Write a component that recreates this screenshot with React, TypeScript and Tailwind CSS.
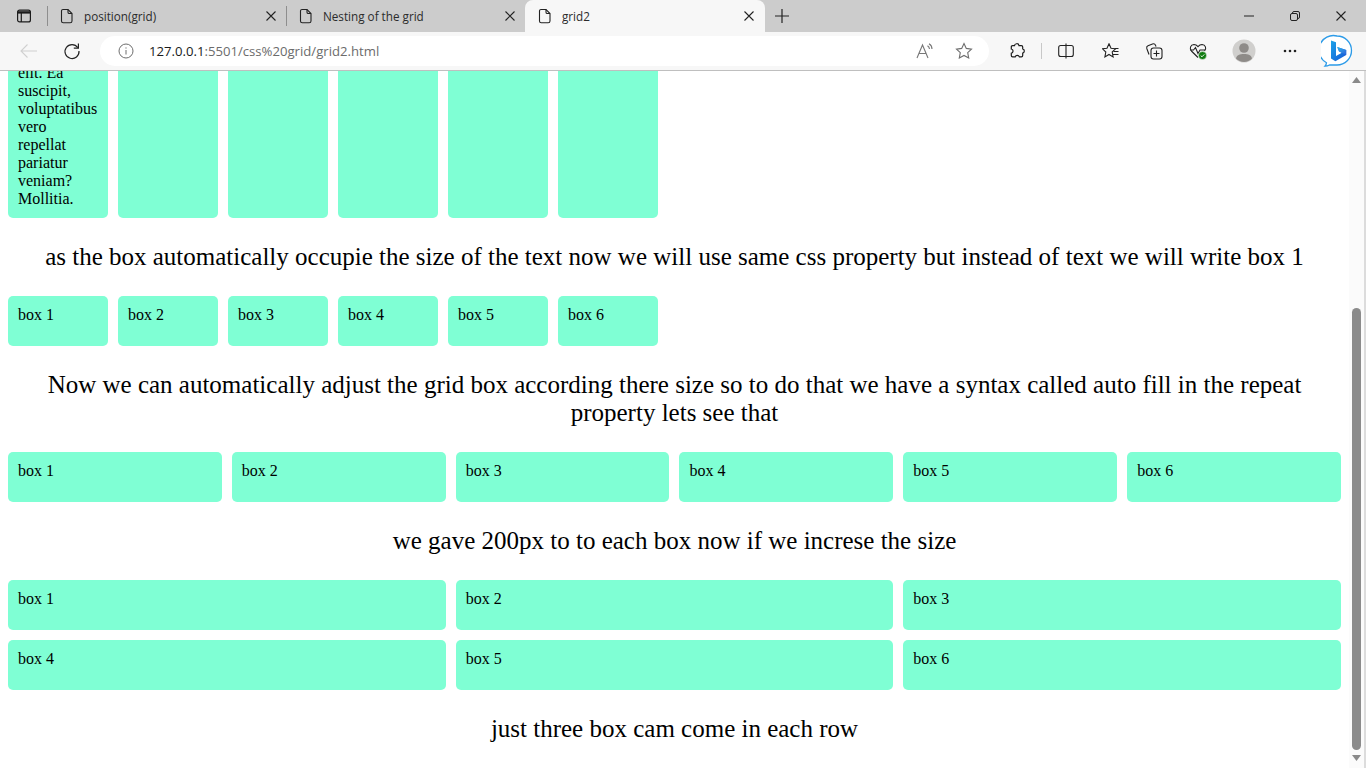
import React from "react";

const Doc = () => (
  <svg width="14" height="16" viewBox="0 0 14 16" fill="none" stroke="#222" strokeWidth="1.1">
    <path d="M3 1.500h5l4 4v7.500a1.800 1.800 0 0 1-1.800 1.800H3.300A1.800 1.800 0 0 1 1.500 13V3A1.500 1.500 0 0 1 3 1.500Z" />
    <path d="M8 1.500v2.700a1.300 1.300 0 0 0 1.300 1.300H12" />
  </svg>
);
const X = ({ s = 10, c = "#222" }: { s?: number; c?: string }) => (
  <svg width={s} height={s} viewBox="0 0 10 10" stroke={c} strokeWidth="1.1" fill="none">
    <path d="M0.500 0.500l9 9M9.500 0.500l-9 9" />
  </svg>
);

function Tab({ title, active, sep }: { title: string; active?: boolean; sep?: boolean }) {
  return (
    <div
      className={
        "relative flex h-8 shrink-0 items-center pr-[11px] " +
        (active ? "ml-[-1px] w-[240px] rounded-t-lg bg-[#f7f7f7] pl-[13px]" : "w-[239px] pl-[12px]")
      }
    >
      <Doc />
      <span className="ml-[10px] mr-[6px] min-w-0 flex-1 truncate text-[11.7px] text-[#2b2b2b]">{title}</span>
      <X />
      {sep && <span className="absolute right-0 top-[6px] h-[20px] w-px bg-[#8e8e8e]" />}
    </div>
  );
}

const Slot = ({ w, children, className = "" }: { w: string; children?: React.ReactNode; className?: string }) => (
  <div className={"flex shrink-0 items-center justify-center " + w + " " + className}>{children}</div>
);

const Box = ({ children, className = "" }: { children?: React.ReactNode; className?: string }) => (
  <div className={"rounded-[5px] bg-[#7fffd4] p-[10px] " + className}>{children}</div>
);

const labels = ["box 1", "box 2", "box 3", "box 4", "box 5", "box 6"];

const Heading = ({ children }: { children: React.ReactNode }) => (
  <p className="my-[25px] text-center text-[25px] leading-[28px]">{children}</p>
);

const Track = ({ cols }: { cols: string }) => (
  <div className={"grid gap-[10px] " + cols}>
    {labels.map((l) => (
      <Box key={l} className="h-[50px]">{l}</Box>
    ))}
  </div>
);

const Bing = () => (
  <svg width="32" height="34" viewBox="0 0 32 34">
    <defs>
      <linearGradient id="bg1" x1="0" y1="0" x2="1" y2="1">
        <stop offset="0" stopColor="#1ba3e8" />
        <stop offset="1" stopColor="#1557d6" />
      </linearGradient>
      <linearGradient id="bg2" x1="0" y1="0" x2="1" y2="1">
        <stop offset="0" stopColor="#2fb5ea" />
        <stop offset="1" stopColor="#2d63dc" />
      </linearGradient>
    </defs>
    <path
      d="M16 2a14.500 14.500 0 0 1 0 29H8.500c-1.600.9-3 1.300-4.600 1.200 1-1 1.500-2 1.600-3.400A14.500 14.500 0 0 1 16 2Z"
      fill="#fff"
      stroke="#2c9be8"
      strokeWidth="1.3"
    />
    <path d="M10 6.500l5 1.700v13.800l5.800-3.300-2.800-1.300-1.800-4.400 9 3.100v4.800l-10.800 6.300-4.400-2.700Z" fill="url(#bg1)" />
    <path d="M16.200 12.900l9 3.100v4.800l-4.400-2.100-2.800-1.400Z" fill="url(#bg2)" />
  </svg>
);

export default function App() {
  return (
    <div className="flex h-[768px] w-[1366px] flex-col overflow-hidden bg-white font-['Liberation_Serif',serif] text-[16px] leading-[18px] text-black">
      <header className="shrink-0 font-['Open_Sans','Noto_Sans',sans-serif]">
        <div className="flex h-8 items-center bg-[#cccccc]">
          <Slot w="w-[48px]" className="relative h-8">
            <svg width="16" height="14" viewBox="0 0 16 14" fill="none" stroke="#1c1c1c" strokeWidth="1.2">
              <rect x="1.600" y="1.100" width="12.800" height="11.800" rx="2" />
              <path d="M1.600 3.400h12.800" strokeWidth="2.400" />
              <path d="M5.300 3.500v9.400" />
            </svg>
            <span className="absolute right-0 top-[6px] h-[20px] w-px bg-[#8e8e8e]" />
          </Slot>
          <Tab title="position(grid)" sep />
          <Tab title="Nesting of the grid" />
          <Tab title="grid2" active />
          <Slot w="w-[34px]">
            <svg width="16" height="16" viewBox="0 0 16 16" stroke="#222" strokeWidth="1.2">
              <path d="M8 1v14M1 8h14" />
            </svg>
          </Slot>
          <div className="flex-1" />
          <Slot w="w-[50px]">
            <svg width="10" height="2" viewBox="0 0 10 2" stroke="#222"><path d="M0 1h10" /></svg>
          </Slot>
          <Slot w="w-[42px]">
            <svg width="10" height="10" viewBox="0 0 10 10" fill="none" stroke="#222">
              <rect x="0.500" y="2.500" width="7" height="7" rx="1.500" />
              <path d="M2.500 2.500V2A1.500 1.500 0 0 1 4 .5h4A1.500 1.500 0 0 1 9.500 2v4A1.500 1.500 0 0 1 8 7.500h-.5" />
            </svg>
          </Slot>
          <Slot w="w-[50px]"><X /></Slot>
        </div>
        <div className="flex h-[39px] items-center border-b border-[#bfbfbf] bg-[#f7f7f7] pb-px">
          <Slot w="w-[100px]" className="gap-[24px]">
            <svg width="20" height="16" viewBox="0 0 20 16" fill="none" stroke="#d0d0d0" strokeWidth="1.1">
              <path d="M2 8h16M8.500 1.500L2 8l6.500 6.500" />
            </svg>
            <svg width="18" height="18" viewBox="0 0 18 18" fill="none" stroke="#222" strokeWidth="1.2">
              <path d="M14.800 5.600A7 7 0 1 0 16 9" />
              <path d="M15.400 1.600v4.600h-4.600" />
            </svg>
          </Slot>
          <div className="flex h-[30px] w-[889px] shrink-0 items-center rounded-full bg-white pl-[18px] pr-[16px]">
            <svg width="16" height="16" viewBox="0 0 16 16" fill="none" stroke="#6e6e6e" strokeWidth="1">
              <circle cx="8" cy="8" r="7" />
              <path d="M8 7v4.500M8 4.400v1.200" />
            </svg>
            <span className="ml-[15px] flex-1 text-[13.15px] leading-[18px] text-[#6b6b6b]">
              <span className="text-[#1a1a1a]">127.0.0.1</span>:5501/css%20grid/grid2.html
            </span>
            <svg width="18" height="16" viewBox="0 0 18 16" fill="none" stroke="#777" strokeWidth="1.1">
              <path d="M1 15L6.500 2 12 15M3 10.500h7" />
              <path d="M11.500 2.800a4 4 0 0 1 2 3.200M13 .8a6 6 0 0 1 3 5.200" />
            </svg>
            <span className="ml-[21px] flex">
              <svg width="18" height="18" viewBox="0 0 18 18" fill="none" stroke="#6e6e6e" strokeWidth="1.1">
                <path d="M9 1.500l2.300 4.900 5.200.7-3.800 3.600 1 5.300L9 13.400l-4.700 2.600 1-5.300L1.500 7.100l5.200-.7Z" />
              </svg>
            </span>
          </div>
          <Slot w="w-[49px]" className="ml-[3px]">
            <svg width="16" height="17" viewBox="0 0 16 17" fill="none" stroke="#1c1c1c" strokeWidth="1.2">
              <path d="M5.500 3.600C5.700 1.200 9.600 1 10 3.600h2.400a1.300 1.300 0 0 1 1.300 1.300v2c2.200.6 2.100 3.700 0 4.300v2.400a1.300 1.300 0 0 1-1.300 1.300h-2c-.8-2.200-3.600-2.100-4.200 0H3.600a1.300 1.300 0 0 1-1.300-1.300v-2.300c2.400-.7 2.300-3.800 0-4.300V5a1.300 1.300 0 0 1 1.300-1.400Z" />
            </svg>
          </Slot>
          <span className="h-[16px] w-px shrink-0 bg-[#c8c8c8]" />
          <Slot w="w-[48px]">
            <svg width="16" height="16" viewBox="0 0 16 16" fill="none" stroke="#222" strokeWidth="1.1">
              <rect x="0.700" y="2.500" width="14.600" height="11" rx="2" />
              <path d="M8 0.500v15" />
            </svg>
          </Slot>
          <Slot w="w-[40px]">
            <svg width="17" height="16" viewBox="0 0 17 16" fill="none" stroke="#222" strokeWidth="1.1">
              <path d="M7 .8l2 4.500 4.500.5-3.300 3.100.9 5L7 11.500 2.900 14l.9-5L.5 5.800 5 5.300Z" />
              <path d="M12.500 5.500h4M11.500 8.500h5M11 11.500h5.500" />
            </svg>
          </Slot>
          <Slot w="w-[48px]">
            <svg className="ml-[-1px]" width="18" height="18" viewBox="0 0 18 18" fill="none" stroke="#222" strokeWidth="1.1">
              <path d="M4 12.500L1.800 6.500c-.4-1.200.1-2.200 1.200-2.700L7.500 2c1.500-.5 2.500 0 3 1.200l.5 1.500" />
              <rect x="6" y="6" width="11" height="11" rx="2.500" />
              <path d="M11.500 8.500v6M8.500 11.500h6" />
            </svg>
          </Slot>
          <Slot w="w-[40px]">
            <svg width="18" height="18" viewBox="0 0 18 18" fill="none">
              <path d="M9 15.500L2.400 9C.2 6.600 1.500 2.600 5 2.500c1.700 0 3 1 4 2.200 1-1.200 2.300-2.200 4-2.200 3.500.1 4.800 4.100 2.600 6.500" stroke="#222" strokeWidth="1.1" />
              <path d="M1 8h3.500L6.500 5.500l2.500 6 2-3.500h5" stroke="#222" strokeWidth="1.1" />
              <circle cx="13.500" cy="13.500" r="4" fill="#107c10" stroke="#f7f7f7" strokeWidth="0.5" />
              <path d="M11.700 13.600l1.300 1.200 2.300-2.400" stroke="#fff" strokeWidth="0.9" />
            </svg>
          </Slot>
          <Slot w="w-[52px]">
            <svg width="24" height="24" viewBox="0 0 24 24">
              <circle cx="12" cy="12" r="11.500" fill="#d0cfcd" />
              <circle cx="12" cy="9" r="4.800" fill="#8e8b88" />
              <path d="M4 19.500c.8-3.400 3.600-4.500 8-4.500s7.200 1.100 8 4.500A11 11 0 0 1 12 23a11 11 0 0 1-8-3.500Z" fill="#8e8b88" />
            </svg>
          </Slot>
          <Slot w="w-[40px]">
            <svg width="14" height="4" viewBox="0 0 14 4" fill="#222">
              <circle cx="2" cy="2" r="1.300" />
              <circle cx="7" cy="2" r="1.300" />
              <circle cx="12" cy="2" r="1.300" />
            </svg>
          </Slot>
          <Slot w="w-[54px]">
            <Bing />
          </Slot>
        </div>
      </header>

      <div className="flex min-h-0 flex-1">
        <main className="min-w-0 flex-1 overflow-hidden px-2">
          <div className="mt-[-107px] grid grid-cols-[repeat(6,100px)] gap-[10px]">
            <Box>
              Lorem ipsum dolor sit amet consectetur adipisicing elit. Ea suscipit, voluptatibus vero repellat pariatur
              veniam? Mollitia.
            </Box>
            <Box />
            <Box />
            <Box />
            <Box />
            <Box />
          </div>
          <Heading>
            as the box automatically occupie the size of the text now we will use same css property but instead of text
            we will write box 1
          </Heading>
          <Track cols="grid-cols-[repeat(6,100px)]" />
          <Heading>
            Now we can automatically adjust the grid box according there size so to do that we have a syntax called auto
            fill in the repeat property lets see that
          </Heading>
          <Track cols="grid-cols-6" />
          <Heading>we gave 200px to to each box now if we increse the size</Heading>
          <Track cols="grid-cols-3" />
          <Heading>just three box cam come in each row</Heading>
        </main>
        <aside className="flex w-[17px] shrink-0 flex-col items-center border-r-2 border-[#dcdcdc] bg-[#fbfbfb] pr-[1px]">
          <svg className="mt-[6px]" width="9" height="6" viewBox="0 0 9 6" fill="#8a8a8a"><path d="M4.500 0L9 6H0Z" /></svg>
          <div className="mt-[225px] h-[442px] w-[9px] rounded-full bg-[#8b8b8b]" />
          <svg className="mt-[5px]" width="9" height="6" viewBox="0 0 9 6" fill="#8a8a8a"><path d="M0 0h9L4.500 6Z" /></svg>
        </aside>
      </div>
    </div>
  );
}
